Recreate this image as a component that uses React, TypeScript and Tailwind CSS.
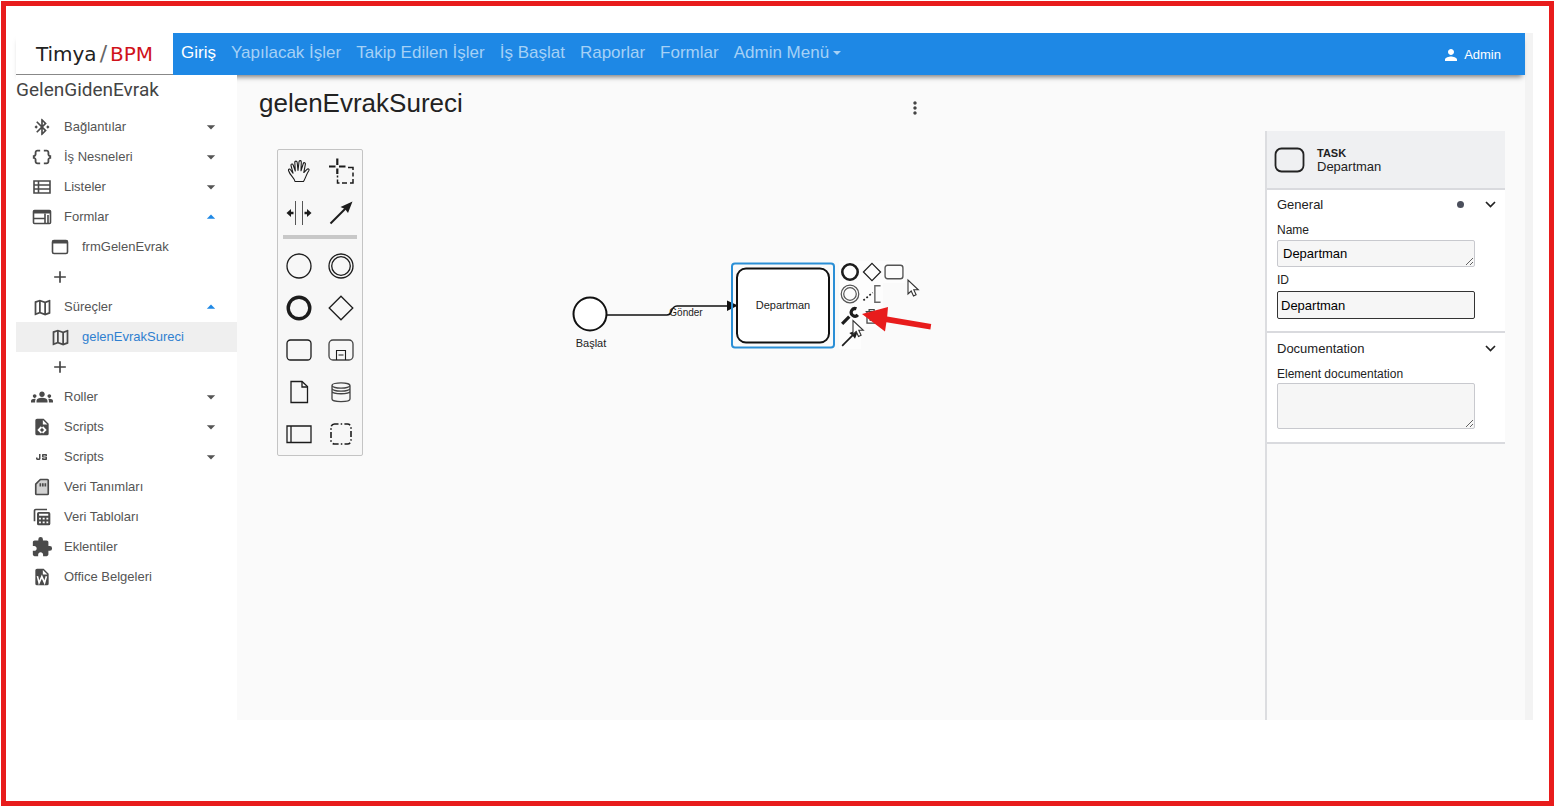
import type { ReactNode } from "react";
import {
  MdArrowDropDown,
  MdArrowDropUp,
  MdDataObject,
  MdExtension,
  MdGroups,
  MdJavascript,
  MdMoreVert,
  MdOutlineBluetoothConnected,
  MdOutlineMap,
  MdPerson,
  MdAdd,
} from "react-icons/md";

const navLinks = ["Yapılacak İşler", "Takip Edilen İşler", "İş Başlat", "Raporlar", "Formlar"];

function ListIcon() {
  return (
    <svg width="22" height="20" viewBox="0 0 22 20" fill="none" stroke="currentColor" strokeWidth="1.6" aria-hidden="true">
      <path d="M3 4h16v12H3zM3 8h16M3 12h16M7.500 4v12" />
    </svg>
  );
}

function FormsIcon() {
  return (
    <svg width="22" height="20" viewBox="0 0 22 20" fill="none" stroke="currentColor" strokeWidth="1.6" aria-hidden="true">
      <rect x="2.500" y="3.500" width="17" height="13" rx="1" />
      <path d="M2.500 5h17" strokeWidth="3" />
      <path d="M2.500 11.500H14M14 6.500v10M17 8v8" />
    </svg>
  );
}

function WindowIcon() {
  return (
    <svg width="22" height="20" viewBox="0 0 22 20" fill="none" stroke="currentColor" strokeWidth="1.6" aria-hidden="true">
      <rect x="3.500" y="3.500" width="15" height="13" rx="1.500" />
      <path d="M3.500 5h15" strokeWidth="3" />
    </svg>
  );
}

function FileCodeIcon() {
  return (
    <svg width="20" height="20" viewBox="0 0 24 24" fill="currentColor" aria-hidden="true">
      <path
        fillRule="evenodd"
        d="M6 2h8l6 6v12a2 2 0 0 1-2 2H6a2 2 0 0 1-2-2V4a2 2 0 0 1 2-2zm7 1.500V9h5.500zM10.600 11.200 6.400 15.500l4.200 4.300 1.600-1.600-2.700-2.700 2.700-2.700zM13.400 11.200 11.800 12.800l2.700 2.700-2.700 2.700 1.600 1.600 4.200-4.300z"
      />
    </svg>
  );
}

function FileWordIcon() {
  return (
    <svg width="20" height="20" viewBox="0 0 24 24" aria-hidden="true">
      <path fill="currentColor" fillRule="evenodd" d="M6 2h8l6 6v12a2 2 0 0 1-2 2H6a2 2 0 0 1-2-2V4a2 2 0 0 1 2-2zm7 1.500V9h5.500z" />
      <path d="M6.500 11 8.500 19l3.300-7.500 3.300 7.500 2.200-8" fill="none" stroke="white" strokeWidth="1.900" />
    </svg>
  );
}

function SdCardIcon() {
  return (
    <svg width="20" height="20" viewBox="0 0 24 24" fill="none" stroke="currentColor" strokeWidth="2" aria-hidden="true">
      <path fill="#d2d2d2" strokeLinejoin="round" d="M10 3h8.500a1 1 0 0 1 1 1v16a1 1 0 0 1-1 1h-13a1 1 0 0 1-1-1V8.500z" />
      <path d="M10 7.500v4M13 7.500v4M16 7.500v4" />
    </svg>
  );
}

function TablesIcon() {
  return (
    <svg width="20" height="20" viewBox="0 0 24 24" aria-hidden="true">
      <path d="M3 17V4.500A1.500 1.500 0 0 1 4.500 3H18" fill="none" stroke="currentColor" strokeWidth="2" />
      <path
        fill="currentColor"
        fillRule="evenodd"
        d="M8 6h12a2 2 0 0 1 2 2v12a2 2 0 0 1-2 2H8a2 2 0 0 1-2-2V8a2 2 0 0 1 2-2zM8.500 8v2.500h11V8zM8.500 13v2h2.200v-2zM12.800 13v2h2.400v-2zM17.300 13v2h2.200v-2zM8.500 17.500v2h2.200v-2zM12.800 17.500v2h2.400v-2zM17.300 17.500v2h2.200v-2z"
      />
    </svg>
  );
}

type Row = { icon?: ReactNode; label?: string; open?: boolean; child?: boolean; active?: boolean };

const rows: Row[] = [
  { icon: <MdOutlineBluetoothConnected size={20} />, label: "Bağlantılar", open: false },
  { icon: <MdDataObject size={22} />, label: "İş Nesneleri", open: false },
  { icon: <ListIcon />, label: "Listeler", open: false },
  { icon: <FormsIcon />, label: "Formlar", open: true },
  { icon: <WindowIcon />, label: "frmGelenEvrak", child: true },
  {},
  { icon: <MdOutlineMap size={21} />, label: "Süreçler", open: true },
  { icon: <MdOutlineMap size={21} />, label: "gelenEvrakSureci", child: true, active: true },
  {},
  { icon: <MdGroups size={22} />, label: "Roller", open: false },
  { icon: <FileCodeIcon />, label: "Scripts", open: false },
  { icon: <MdJavascript size={24} className="shrink-0" />, label: "Scripts", open: false },
  { icon: <SdCardIcon />, label: "Veri Tanımları" },
  { icon: <TablesIcon />, label: "Veri Tabloları" },
  { icon: <MdExtension size={22} />, label: "Eklentiler" },
  { icon: <FileWordIcon />, label: "Office Belgeleri" },
];

function SidebarRow({ row }: { row: Row }) {
  if (!row.label) {
    return (
      <li>
        <button type="button" aria-label="Ekle" className="flex h-[30px] w-full items-center pl-[34px] text-[#444]">
          <MdAdd size={20} />
        </button>
      </li>
    );
  }
  return (
    <li>
      <a
        href="#"
        className={`flex h-[30px] items-center pr-4 text-[13px] ${row.child ? "pl-[33px]" : "pl-[15px]"} ${
          row.active ? "bg-[#efefef] text-[#2f7fd0]" : "text-[#555]"
        }`}
      >
        <span className="flex w-[22px] justify-center text-[#4a4a4a]">{row.icon}</span>
        <span className="ml-[11px] flex-1">{row.label}</span>
        {row.open === false && <MdArrowDropDown size={20} className="text-[#555]" />}
        {row.open === true && <MdArrowDropUp size={20} className="text-[#1e88e5]" />}
      </a>
    </li>
  );
}

function Glyph({ size = 28, children }: { size?: number; children: ReactNode }) {
  return (
    <svg width={size} height={size} viewBox="0 0 28 28" fill="none" stroke="#1c1c1c" strokeWidth="1.3" aria-hidden="true">
      {children}
    </svg>
  );
}

const tools: { name: string; art: ReactNode }[] = [
  {
    name: "Hand tool",
    art: (
      <path
        strokeWidth="1.1"
        strokeLinejoin="round"
        d="M10 24.500C9.500 21 5 18.500 3.500 13.500c-.3-1.500 1.300-1.900 2-.8L8 16.200 6 8.500c-.3-1.700 1.700-2.100 2.200-.5L10.300 14 9.800 5.500c0-1.800 2.200-1.800 2.400 0l.8 8L14 4.800c.2-1.700 2.400-1.500 2.300.2L16 13.800l2.300-7.300c.5-1.500 2.400-.9 2.100.7l-1.600 8.300 3.200-3.200c1.100-1 2.600 0 1.900 1.200-2.500 3.500-3.400 8-5.400 11z"
      />
    ),
  },
  {
    name: "Lasso tool",
    art: (
      <>
        <path strokeWidth="2.200" d="M2 9.500h6.500M12 9.500h6.500M10.300 1.500V8M10.300 11.500V17" />
        <path strokeWidth="1.500" d="M21 10.500h5V13M26 15.500v4M26 22v4h-3M20 26h-5M12.500 26h-2v-3.500M10.500 20.500v-2" />
      </>
    ),
  },
  {
    name: "Space tool",
    art: (
      <>
        <path strokeWidth="1" stroke="#555" d="M10.500 2v24M17.500 2v24" />
        <path strokeWidth="2.400" d="M4 14h4.500M24 14h-4.500" />
        <path fill="#1c1c1c" stroke="none" d="M1.500 14 6 10v8zM26.500 14 22 10v8z" />
      </>
    ),
  },
  {
    name: "Connect tool",
    art: (
      <>
        <path strokeWidth="2" d="M3.500 24.500 20 8" />
        <path fill="#1c1c1c" stroke="none" d="M25.500 2.500 21 14l-3-4-4.500-2z" />
      </>
    ),
  },
  { name: "Start event", art: <circle cx="14" cy="14" r="12" /> },
  {
    name: "Intermediate event",
    art: (
      <>
        <circle cx="14" cy="14" r="12" />
        <circle cx="14" cy="14" r="9.300" />
      </>
    ),
  },
  { name: "End event", art: <circle cx="14" cy="14" r="10.800" strokeWidth="3.400" /> },
  { name: "Gateway", art: <path d="M14 2.200 25.800 14 14 25.800 2.200 14z" /> },
  { name: "Task", art: <rect x="2" y="4" width="24" height="20" rx="3.500" /> },
  {
    name: "Sub process",
    art: (
      <>
        <rect x="2" y="4" width="24" height="20" rx="4" stroke="#444" />
        <path strokeWidth="1.100" d="M9.500 24v-9.500h9V24M11.500 19h5" />
      </>
    ),
  },
  {
    name: "Data object",
    art: (
      <>
        <path d="M6 3.500h11l5.500 5V24.500H6z" />
        <path d="M17 3.500V9h5.500" />
      </>
    ),
  },
  {
    name: "Data store",
    art: (
      <path
        stroke="#444"
        d="M5 7.500C5 4 23 4 23 7.500v13.500c0 3.500-18 3.500-18 0zM5 7.500C6 11 22 11 23 7.500M5 10.500C6 14 22 14 23 10.500M5 13.500c1 3 17 3 18 0"
      />
    ),
  },
  { name: "Participant", art: <path d="M2 6h24v16.500H2zM6 6v16.500" /> },
  {
    name: "Group",
    art: <rect x="4" y="4" width="20" height="20" rx="3.500" strokeWidth="1.600" strokeDasharray="6 2.200 1.500 2.200" strokeDashoffset="2" />,
  },
];

function ToolGrid({ items }: { items: typeof tools }) {
  return (
    <div className="grid grid-cols-2">
      {items.map((tool) => (
        <button key={tool.name} type="button" aria-label={tool.name} className="flex size-[42px] items-center justify-center">
          <Glyph>{tool.art}</Glyph>
        </button>
      ))}
    </div>
  );
}

const padItems: ({ name: string; art: ReactNode } | null)[] = [
  { name: "Append end event", art: <circle cx="14" cy="14" r="10.800" strokeWidth="3.600" /> },
  { name: "Append gateway", art: <path strokeWidth="1.700" d="M14 2 26 14 14 26 2 14z" /> },
  { name: "Append task", art: <rect x="1.500" y="4.500" width="25" height="19" rx="3.500" stroke="#555" strokeWidth="1.900" /> },
  {
    name: "Append intermediate event",
    art: (
      <>
        <circle cx="14" cy="14" r="12.300" stroke="#555" strokeWidth="1.700" />
        <circle cx="14" cy="14" r="8.800" stroke="#555" strokeWidth="1.700" />
      </>
    ),
  },
  {
    name: "Add text annotation",
    art: (
      <>
        <path strokeWidth="2.400" strokeDasharray="2.500 3" d="M2 23 15 12" />
        <path strokeWidth="2" stroke="#666" d="M26 2.500h-8v23h8" />
      </>
    ),
  },
  null,
  {
    name: "Change type",
    art: (
      <>
        <path strokeWidth="4.500" d="M3 25 13 15" />
        <path strokeWidth="4.500" d="M23 4a5.300 5.300 0 1 0 2 8.500" />
      </>
    ),
  },
  {
    name: "Delete",
    art: <path strokeWidth="1.800" stroke="#444" d="M5 8h16M10 8V5h7v3M7 8v16h13V8M11.500 12v9M16 12v9" />,
  },
  null,
  {
    name: "Connect",
    art: (
      <>
        <path strokeWidth="2.400" d="M3 25 20 8" />
        <path fill="#1c1c1c" stroke="none" d="M26 2 21 15l-3.500-4.500L13 7z" />
      </>
    ),
  },
];

function Diagram() {
  return (
    <>
      <svg className="absolute inset-0 size-full" aria-hidden="true">
        <g fill="none" stroke="#111">
          <circle cx="353" cy="183" r="16.500" fill="white" strokeWidth="2" />
          <path strokeWidth="1.700" d="M370 184h60q3 0 4-3 2-6 6-6h52" />
          <path fill="#111" stroke="none" d="M490 169.500 501 174.500 490 180z" />
          <rect x="495" y="132.500" width="102" height="84" rx="3" stroke="#2b8fd6" strokeWidth="2" />
          <rect x="500" y="137.500" width="92" height="74" rx="9" fill="white" strokeWidth="2" />
        </g>
      </svg>
      <span className="absolute top-[204px] left-[354px] -translate-x-1/2 text-[11px] leading-4 text-[#222]">Başlat</span>
      <span className="absolute top-[174px] left-[449px] -translate-x-1/2 text-[10px] leading-4 text-[#222]">Gönder</span>
      <span className="absolute top-[166px] left-[546px] -translate-x-1/2 text-[11px] leading-4 text-[#222]">Departman</span>
      <div className="absolute top-[130px] left-[602px] grid w-[66px] grid-cols-3">
        {padItems.map((item, i) =>
          item ? (
            <button
              key={item.name}
              type="button"
              aria-label={item.name}
              className="flex size-[22px] items-center justify-center bg-white/60"
            >
              <Glyph size={20}>{item.art}</Glyph>
            </button>
          ) : (
            <span key={i} />
          ),
        )}
      </div>
      <svg className="pointer-events-none absolute inset-0 size-full" aria-hidden="true">
        <g fill="white" stroke="#333" strokeWidth="1.100">
          <path d="M671 149v14l3.200-3 2.300 5 2.600-1.200-2.300-5h4.500z" />
          <path d="M616 189.500v14l3.200-3 2.300 5 2.600-1.200-2.300-5h4.500z" />
        </g>
        <path fill="#e81c1c" d="M625 183 651 176l-.8 9.500 44 7.500-.8 5.500-44-7.200-1.400 9.200z" />
      </svg>
    </>
  );
}

function GroupHeader({ title, edited }: { title: string; edited?: boolean }) {
  return (
    <button type="button" className="flex h-[29px] w-full items-center pr-2 text-left text-[13px] text-[#222]">
      <span className="flex-1">{title}</span>
      {edited && <span className="mr-5 size-[7px] rounded-full bg-[#4b4f5c]" />}
      <svg width="13" height="13" viewBox="0 0 13 13" fill="none" stroke="#222" strokeWidth="1.700" aria-hidden="true">
        <path d="M2 4l4.500 4.500L11 4" />
      </svg>
    </button>
  );
}

function PropertiesPanel() {
  return (
    <aside className="mr-5 w-[240px] border-l-2 border-[#dcdde0] text-[#222]">
      <header className="flex h-[59px] items-center gap-3 border-b-2 border-[#d9dade] bg-[#eff0f2] pl-[7px]">
        <svg width="31" height="26" viewBox="0 0 31 26" aria-hidden="true">
          <rect x="1.500" y="1.500" width="28" height="23" rx="6" fill="none" stroke="#222" strokeWidth="1.800" />
        </svg>
        <div>
          <div className="text-[11px] leading-[14px] font-bold">TASK</div>
          <div className="text-[13px] leading-[14px]">Departman</div>
        </div>
      </header>
      <section className="border-b-2 border-[#d9dade] bg-white pb-3 pl-[10px]">
        <GroupHeader title="General" edited />
        <div className="mr-[30px] flex flex-col">
          <label htmlFor="name" className="h-[21px] text-xs leading-[22px]">Name</label>
          <textarea
            id="name"
            defaultValue="Departman"
            rows={1}
            className="h-[27px] resize overflow-hidden rounded-xs border border-[#c8c9ce] bg-[#f6f6f6] px-[5px] text-[13px] leading-[25px] text-black"
          />
          <label htmlFor="element-id" className="mt-[2px] h-[22px] text-xs leading-[22px]">ID</label>
          <input
            id="element-id"
            defaultValue="Departman"
            className="h-[28px] rounded-xs border border-[#333] bg-[#f6f6f6] px-[3px] text-[13px] text-black"
          />
        </div>
      </section>
      <section className="border-b-2 border-[#d9dade] bg-white pt-px pb-[13px] pl-[10px]">
        <GroupHeader title="Documentation" />
        <div className="mr-[30px] flex flex-col">
          <label htmlFor="documentation" className="h-5 text-xs leading-[22px]">Element documentation</label>
          <textarea
            id="documentation"
            className="h-[46px] resize rounded-xs border border-[#c8c9ce] bg-[#f6f6f6] px-[5px] text-[13px] text-black"
          />
        </div>
      </section>
    </aside>
  );
}

export default function App() {
  return (
    <div className="min-h-screen bg-white p-px font-['Liberation_Sans',Arial,sans-serif]">
      <div className="min-h-[805px] border-[5px] border-[#e81c1c] pt-[27px] pr-4 pl-[10px]">
        <div className="flex min-h-[687px] bg-[#f3f3f3] pr-2">
          <div className="flex min-w-0 flex-1 flex-col">
            <header className="relative z-10 flex h-[42px] bg-[#1e88e5] shadow-[0_5px_5px_-3px_rgba(0,0,0,0.5)]">
              <a
                href="#"
                className="flex w-[157px] items-center justify-center border-b border-[#888] bg-white font-['DejaVu_Sans',sans-serif] text-[20px]"
              >
                <span className="text-[#222]">Timya</span>
                <span className="px-[3px] text-[22px] text-[#666]">/</span>
                <span className="text-[#d0121b]">BPM</span>
              </a>
              <nav className="flex flex-1 items-center gap-[15px] pr-6 pb-[3px] pl-2 text-[17px] text-[#a5d1f6]">
                <a href="#" className="text-white">Giriş</a>
                {navLinks.map((label) => (
                  <a key={label} href="#">{label}</a>
                ))}
                <button type="button" className="flex items-center gap-1">
                  Admin Menü
                  <span className="border-x-4 border-t-4 border-x-transparent border-t-[#a5d1f6]" />
                </button>
                <a href="#" className="mt-1 ml-auto flex items-center gap-1 text-[13px] text-white">
                  <MdPerson size={18} />
                  Admin
                </a>
              </nav>
            </header>
            <div className="flex flex-1">
              <aside className="relative z-20 w-[221px] bg-white">
                <h2 className="h-[37px] font-[Roboto,sans-serif] text-[19px] leading-[30px] text-[#444]">GelenGidenEvrak</h2>
                <ul>
                  {rows.map((row, i) => (
                    <SidebarRow key={i} row={row} />
                  ))}
                </ul>
              </aside>
              <main className="flex min-w-0 flex-1 flex-col bg-[#fafafa]">
                <div className="flex h-14 w-[688px] items-center justify-between pl-[22px]">
                  <h1 className="text-[26px] leading-[54px] text-[#222]">gelenEvrakSureci</h1>
                  <button type="button" aria-label="Menü" className="mt-[10px] text-[#444]">
                    <MdMoreVert size={20} />
                  </button>
                </div>
                <div className="flex flex-1">
                  <div className="relative flex-1">
                    <Diagram />
                    <div className="absolute top-[18px] left-10 rounded-xs border border-[#c4c4c4] bg-[#f7f7f7]">
                      <ToolGrid items={tools.slice(0, 4)} />
                      <hr className="mx-[5px] mt-px mb-[6px] h-1 border-0 bg-[#c8c8c8]" />
                      <ToolGrid items={tools.slice(4)} />
                    </div>
                  </div>
                  <PropertiesPanel />
                </div>
              </main>
            </div>
          </div>
        </div>
      </div>
    </div>
  );
}
